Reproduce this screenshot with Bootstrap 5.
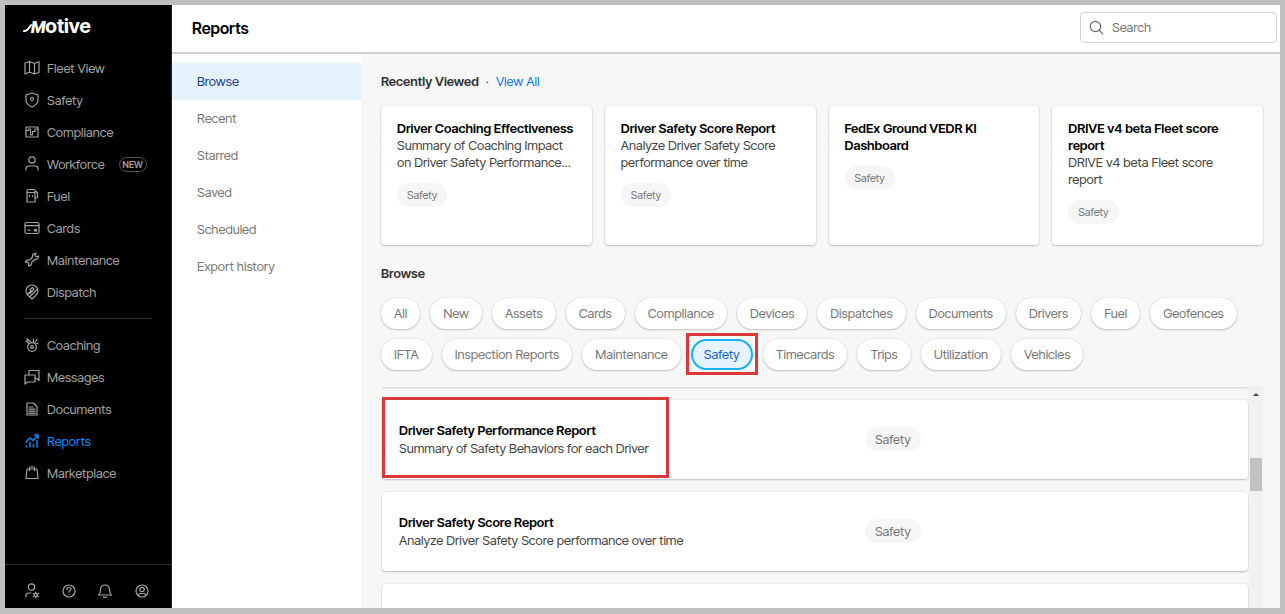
<!DOCTYPE html>
<html lang="en">
<head>
<meta charset="utf-8">
<meta name="viewport" content="width=device-width, initial-scale=1">
<title>Reports</title>
<link href="https://cdn.jsdelivr.net/npm/bootstrap@5.3.0/dist/css/bootstrap.min.css" rel="stylesheet">
<style>
body{font-family:"Inter Tight",Inter,"Liberation Sans",sans-serif;font-size:13px;line-height:17px;color:#444;background:#bfbfbf}
a{text-decoration:none}
.frame{height:100vh;padding:5px 5px 6px}
.side{width:167px;background:#000;border-right:1px solid #222}
.logo{padding:9px 18px 0;height:47px;color:#fff;font-size:20px;line-height:24px;font-weight:700}
.logo i{font-size:16px;font-weight:800}
.logo svg{stroke-width:2;margin-right:-1px}
.side .nav-link{display:flex;align-items:center;height:32px;padding:0 0 0 18px;color:#a3a3a3;gap:6px}
.side .nav-link.active{color:#0a8bff}
svg{fill:none;stroke:currentColor;stroke-width:1.2;stroke-linecap:round;stroke-linejoin:round;flex:none}
.newtag{font-size:9px;line-height:13px;font-weight:600;border:1px solid #555;border-radius:8px;padding:0 3px;margin-left:8px}
.side hr{margin:10px 19px;border-color:#333;opacity:1}
.foot{height:44px;border-top:1px solid #2b2b2b;padding:17px 20px 0 18px;color:#a3a3a3}
.foot a{color:inherit}
.top{height:49px;border-bottom:2px solid #d0d0d0;padding:0 3px 2px 20px;background:#fff}
.top h1{font-size:16px;line-height:20px;font-weight:600;color:#000}
.search{width:197px;height:31px;border:1px solid #d5d5d5;border-radius:4px;padding:0 8px;color:#666}
.search input{border:0;outline:0;background:none;color:#444;min-width:0}
.search input::placeholder{color:#777;opacity:1}
.sub{width:189px;background:#fff;padding-top:9px}
.sub .nav-link{height:37px;padding:10px 25px;color:#777}
.sub .nav-link.active{background:#e5f3ff;color:#1a3a94}
.main{background:#f7f7f7;padding:19px 17px 0 20px}
h2{font-size:13px;line-height:17px;font-weight:600;color:#333}
.heading{gap:7px}
.viewall{color:#0a7cf0}
.tiles{--bs-gutter-x:13px;margin-top:16px}
.panel{background:#fff;border-radius:4px;box-shadow:0 0 2px #0002,0 1px 2px #0003}
.tile{height:139px;padding:14px 16px}
h3{font-size:13px;line-height:17px;font-weight:600;color:#000}
.tag{display:inline-block;background:#f6f6f6;border-radius:12px;color:#777;line-height:24px;padding:0 10px}
.tile .tag{font-size:11px;margin-top:12px}
.chips{gap:10px;margin-top:16px;padding-bottom:16px}
.chip{position:relative;height:31px;padding:0 13px;border:0;border-radius:16px;background:#fff;color:#777;box-shadow:0 0 2px #0002,0 1px 2px #0003}
.chip.on{background:#e5f3ff;color:#1664d0;box-shadow:inset 0 0 0 2px #18b0f5}
.chip.on::after{content:"";position:absolute;inset:-6px -5px -5px;border:3px solid #dc3838}
.list{padding:0 1px;gap:13px}
.edge{flex:none;height:1px}
.item{position:relative;flex:none;height:79px;padding:0 17px 2px}
.item .what{flex:0 0 56%}
.item p{line-height:18px}
.item h3{line-height:18px}
.callout{position:absolute;left:0;top:-3px;bottom:1px;width:287px;border:3px solid #dc3838}
.track{flex:0 0 14px;background:#f1f1f1;color:#444;padding:5px 1px 0}
.thumb{height:33px;margin-top:61px;background:#c1c1c1;width:12px}
</style>
</head>
<body>
<div class="frame d-flex">
<aside class="side d-flex flex-column flex-shrink-0">
  <a href="#" class="logo d-block"><svg width="9" height="9" viewBox="0 0 9 9"><path d="M1 8Q4 8.500 8 2"/></svg><i>M</i>otive</a>
  <nav class="nav flex-column">
    <a class="nav-link" href="#"><svg width="18" height="18" viewBox="0 0 18 18"><path d="M2 4l4.500-1.500 5 2L16 2.500v11L11.500 15l-5-2L2 15zM6.500 2.500V13M11.500 4.500V15"/></svg>Fleet View</a>
    <a class="nav-link" href="#"><svg width="18" height="18" viewBox="0 0 18 18"><path d="M9 2l6 2v5q0 4.500-6 7Q3 13.500 3 9V4z"/><circle cx="9" cy="8" r="1.500"/></svg>Safety</a>
    <a class="nav-link" href="#"><svg width="18" height="18" viewBox="0 0 18 18"><rect x="3" y="4" width="12" height="10"/><path d="M3 7.500h2.500V6h2v6h2V8.500H12V6h3"/></svg>Compliance</a>
    <a class="nav-link" href="#"><svg width="18" height="18" viewBox="0 0 18 18"><circle cx="9" cy="5" r="3.200"/><path d="M3 15v-1.500q0-2.500 2.500-2.500h7q2.500 0 2.500 2.500V15"/></svg>Workforce<span class="newtag">NEW</span></a>
    <a class="nav-link" href="#"><svg width="18" height="18" viewBox="0 0 18 18"><path d="M4 15V4q0-1.500 1.500-1.500h5Q12 2.500 12 4v11zM4 5.500h8M12 11h1.500q1 0 1-1V6L13 4.500M6.500 8.500v1M9.500 8.500v1"/></svg>Fuel</a>
    <a class="nav-link" href="#"><svg width="18" height="18" viewBox="0 0 18 18"><rect x="2" y="3.500" width="14" height="11" rx="1.500"/><path d="M2 6.700h14M5 11.200h2"/><rect x="11.500" y="10.500" width="2" height="1.500" fill="currentColor"/></svg>Cards</a>
    <a class="nav-link" href="#"><svg width="18" height="18" viewBox="0 0 18 18"><path d="M13 2.300Q9 2.300 9.500 6.200L6.500 9Q3 8.300 2.500 11.500l2.200-.5 1.300 1.300-.6 2.400Q9 15 8.700 11.300L12 8.300q3.300.5 3.600-3.300l-2.300.8-1.400-1.300z"/></svg>Maintenance</a>
    <a class="nav-link" href="#"><svg width="18" height="18" viewBox="0 0 18 18"><path d="M9 16Q3 11.500 3 7.800a6 5.800 0 0 1 12 0Q15 11.500 9 16zM5 11l3-3.300L7 6.500 9.500 4.500 11 6 7 10.500M7 13.500l3.500-3.500M10.500 10l4-4"/></svg>Dispatch</a>
  </nav>
  <hr>
  <nav class="nav flex-column">
    <a class="nav-link" href="#"><svg width="18" height="18" viewBox="0 0 18 18"><circle cx="9" cy="11" r="4.300"/><circle cx="9" cy="11" r="1.400"/><path d="M6 8L3.500 5M8 6.500L4 2.500M3.500 5q1 .5 1-.5T6 4M10.500 5.500V3M12 6.500l2-3M13 8l2-.7"/></svg>Coaching</a>
    <a class="nav-link" href="#"><svg width="18" height="18" viewBox="0 0 18 18"><path d="M6 7V2.500h10v10l-2.500-2H12M2 7h10v7H4.500L2 16z"/></svg>Messages</a>
    <a class="nav-link" href="#"><svg width="18" height="18" viewBox="0 0 18 18"><path d="M4 3h6.500L14 6.500V15H4zM6 7h4M6 9.200h6M6 11.200h6M6 13.200h6"/></svg>Documents</a>
    <a class="nav-link active" href="#"><svg width="18" height="18" viewBox="0 0 18 18"><path d="M3 10l4-4 3 2.500L15 3M11.500 3H15v3.500M3.500 15v-1M7 15v-4.500M10.500 15v-2.500M14 15V8.500" stroke-width="1.500"/></svg>Reports</a>
    <a class="nav-link" href="#"><svg width="18" height="18" viewBox="0 0 18 18"><path d="M4 5h10l1 9.500H3zM6.500 6.500V4q0-1 1-1h3q1 0 1 1v2.500"/></svg>Marketplace</a>
  </nav>
  <div class="foot mt-auto d-flex justify-content-between align-items-start">
    <a href="#" aria-label="Admin"><svg width="18" height="18" viewBox="0 0 18 18"><circle cx="8.500" cy="5" r="3.200"/><path d="M3 15v-1.500Q3 11 5.500 11H8"/><circle cx="12.800" cy="13" r="1.600"/><path d="M12.800 10v1.400M12.800 14.600V16M10.200 11.500l1.200.7M14.200 13.800l1.200.7M10.200 14.500l1.200-.7M14.200 12.200l1.200-.7"/></svg></a>
    <a href="#" aria-label="Help"><svg width="18" height="18" viewBox="0 0 18 18"><circle cx="9" cy="9" r="6"/><path d="M7 7.500q0-2 2-2t2 1.700Q11 8.200 9 9.500v.8M9 12.300v.1"/></svg></a>
    <a href="#" aria-label="Notifications"><svg width="18" height="18" viewBox="0 0 18 18"><path d="M2.500 13h13Q13.500 11.500 13.500 8 13.500 3 9 3T4.500 8Q4.500 11.500 2.500 13zM7.500 15q1.500 1 3 0"/></svg></a>
    <a href="#" aria-label="Account"><svg width="18" height="18" viewBox="0 0 18 18"><circle cx="9" cy="9" r="6"/><circle cx="9" cy="7.500" r="2.200"/><path d="M5.500 13.500q0-2 2-2h3q2 0 2 2"/></svg></a>
  </div>
</aside>
<div class="flex-grow-1 d-flex flex-column overflow-hidden">
  <header class="top d-flex align-items-center justify-content-between flex-shrink-0">
    <h1 class="m-0">Reports</h1>
    <label class="search d-flex align-items-center gap-2"><svg width="15" height="15" viewBox="0 0 15 15"><circle cx="6.500" cy="6.500" r="5.200"/><path d="M10.300 10.300l3.500 3.500"/></svg><input type="search" class="flex-grow-1 p-0" placeholder="Search" aria-label="Search"></label>
  </header>
  <div class="d-flex flex-grow-1 overflow-hidden">
    <nav class="sub nav flex-column flex-nowrap flex-shrink-0">
      <a class="nav-link active" href="#">Browse</a><a class="nav-link" href="#">Recent</a><a class="nav-link" href="#">Starred</a><a class="nav-link" href="#">Saved</a><a class="nav-link" href="#">Scheduled</a><a class="nav-link" href="#">Export history</a>
    </nav>
    <main class="main flex-grow-1 d-flex flex-column overflow-hidden">
      <div class="heading d-flex"><h2 class="m-0">Recently Viewed</h2><span>·</span><a class="viewall" href="#">View All</a></div>
      <div class="row row-cols-4 tiles">
        <div class="col"><article class="panel tile"><h3 class="m-0">Driver Coaching Effectiveness</h3><p class="m-0">Summary of Coaching Impact on Driver Safety Performance...</p><span class="tag">Safety</span></article></div>
        <div class="col"><article class="panel tile"><h3 class="m-0">Driver Safety Score Report</h3><p class="m-0">Analyze Driver Safety Score performance over time</p><span class="tag">Safety</span></article></div>
        <div class="col"><article class="panel tile"><h3 class="m-0">FedEx Ground VEDR KI Dashboard</h3><span class="tag">Safety</span></article></div>
        <div class="col"><article class="panel tile"><h3 class="m-0">DRIVE v4 beta Fleet score report</h3><p class="m-0">DRIVE v4 beta Fleet score report</p><span class="tag">Safety</span></article></div>
      </div>
      <h2 class="mb-0 mt-3 pt-1">Browse</h2>
      <div class="chips d-flex flex-wrap">
        <button class="chip">All</button><button class="chip">New</button><button class="chip">Assets</button><button class="chip">Cards</button><button class="chip">Compliance</button><button class="chip">Devices</button><button class="chip">Dispatches</button><button class="chip">Documents</button><button class="chip">Drivers</button><button class="chip">Fuel</button><button class="chip">Geofences</button><button class="chip">IFTA</button><button class="chip">Inspection Reports</button><button class="chip">Maintenance</button><button class="chip on">Safety</button><button class="chip">Timecards</button><button class="chip">Trips</button><button class="chip">Utilization</button><button class="chip">Vehicles</button>
      </div>
      <div class="d-flex flex-grow-1 overflow-hidden">
        <div class="list flex-grow-1 d-flex flex-column overflow-hidden">
          <div class="panel edge"></div>
          <article class="panel item d-flex align-items-center"><div class="what"><h3 class="m-0">Driver Safety Performance Report</h3><p class="m-0">Summary of Safety Behaviors for each Driver</p></div><span class="tag">Safety</span><div class="callout"></div></article>
          <article class="panel item d-flex align-items-center"><div class="what"><h3 class="m-0">Driver Safety Score Report</h3><p class="m-0">Analyze Driver Safety Score performance over time</p></div><span class="tag">Safety</span></article>
          <article class="panel item"></article>
        </div>
        <div class="track"><svg class="d-block mx-auto" width="6" height="6" viewBox="0 0 6 6"><path d="M0 5l3-3 3 3z" fill="currentColor" stroke="none"/></svg><div class="thumb"></div></div>
      </div>
    </main>
  </div>
</div>
</div>
<script src="https://cdn.jsdelivr.net/npm/bootstrap@5.3.0/dist/js/bootstrap.bundle.min.js"></script>
</body>
</html>
